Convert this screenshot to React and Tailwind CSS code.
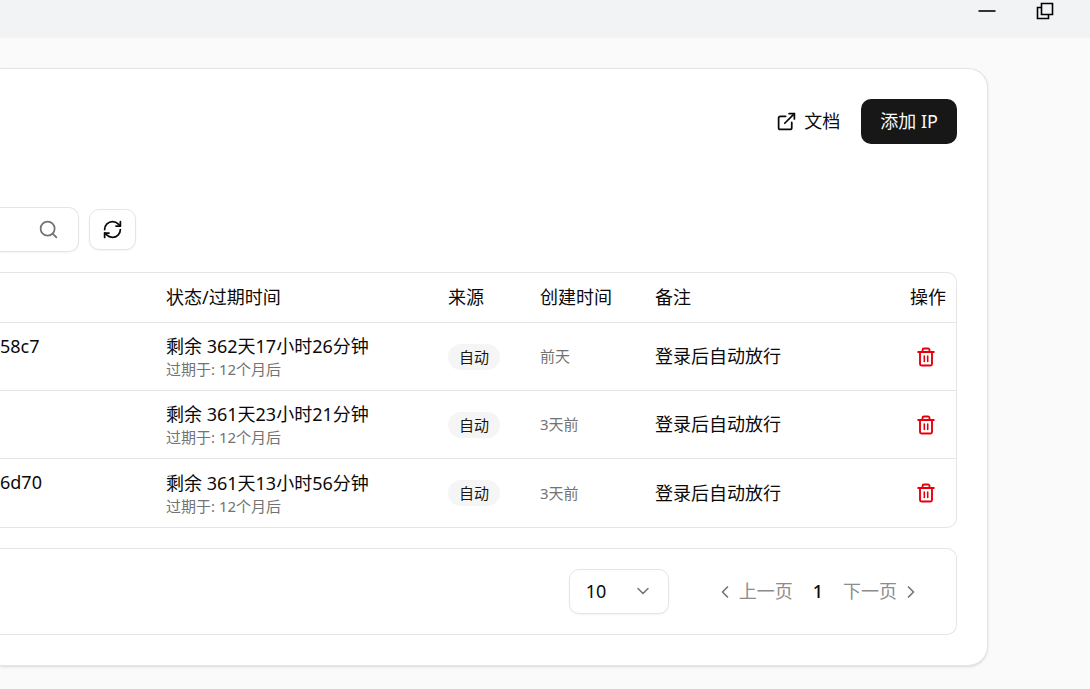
import React, { useState } from 'react';
import { ChevronDown, ChevronLeft, ChevronRight, ExternalLink, RefreshCw, Search } from 'lucide-react';

const rows = [
  { id: 1, ip: '58c7', remaining: '剩余 362天17小时26分钟', expires: '过期于: 12个月后', source: '自动', created: '前天', note: '登录后自动放行' },
  { id: 2, ip: '', remaining: '剩余 361天23小时21分钟', expires: '过期于: 12个月后', source: '自动', created: '3天前', note: '登录后自动放行' },
  { id: 3, ip: '6d70', remaining: '剩余 361天13小时56分钟', expires: '过期于: 12个月后', source: '自动', created: '3天前', note: '登录后自动放行' },
];

const TrashIcon = () => (
  <svg width="18" height="20" viewBox="0 0 18 20" fill="none" stroke="currentColor" strokeWidth="1.9" strokeLinecap="round" strokeLinejoin="round">
    <path d="M1.2 5h15.6" />
    <path d="M5.5 4.500V3a1.500 1.500 0 0 1 1.500-1.500h4A1.500 1.500 0 0 1 12.500 3v1.500" />
    <path d="M3 5v12a1.500 1.500 0 0 0 1.500 1.500h9A1.500 1.500 0 0 0 15 17V5" />
    <path d="M7.300 9v5.500M10.700 9v5.500" strokeWidth="1.600" />
  </svg>
);

const TitleBar = () => (
  <header className="flex h-[38px] items-start justify-end gap-[38px] bg-[#f1f3f5] pr-[35px] text-black">
    <button aria-label="最小化" className="flex h-[22px] w-5 items-center justify-center">
      <svg width="18" height="18" viewBox="0 0 18 18" stroke="#333" strokeWidth="2">
        <path d="M0.5 9h17" />
      </svg>
    </button>
    <button aria-label="还原" className="flex h-[22px] w-5 items-center justify-center">
      <svg width="18" height="18" viewBox="0 0 18 18" fill="none" stroke="currentColor" strokeWidth="1.6">
        <path d="M5.5 1.5h11v11h-11z" />
        <path d="M5.5 5.5h-4v11h11v-4" />
      </svg>
    </button>
  </header>
);

const Pagination = ({ pageSize, onPageSizeChange }) => (
  <div className="mt-5 flex items-center justify-end gap-[46px] rounded-r-[10px] border border-l-0 border-neutral-200 py-5 pr-[35px]">
    <div className="relative">
      <select
        aria-label="每页数量"
        value={pageSize}
        onChange={(e) => onPageSizeChange(e.target.value)}
        className="h-[45px] w-[100px] appearance-none rounded-[10px] border border-neutral-200 bg-white px-4 shadow-xs"
      >
        <option value="10">10</option>
        <option value="20">20</option>
        <option value="50">50</option>
      </select>
      <ChevronDown className="pointer-events-none absolute top-3 right-4 text-neutral-500" size={20} strokeWidth={1.8} />
    </div>
    <nav className="flex items-center gap-5">
      <button disabled className="flex items-center gap-1 text-[#8c8c8c]">
        <ChevronLeft className="text-neutral-500" size={20} />
        上一页
      </button>
      <span className="font-medium">1</span>
      <button disabled className="flex items-center gap-1 text-[#8c8c8c]">
        下一页
        <ChevronRight className="text-neutral-500" size={20} />
      </button>
    </nav>
  </div>
);

const App = () => {
  const [keyword, setKeyword] = useState('');
  const [pageSize, setPageSize] = useState('10');

  return (
    <div className="min-h-screen bg-[#fafafa] font-['Noto_Sans','Noto_Sans_CJK_SC',sans-serif] text-[18px] leading-[25px] text-neutral-950">
      <TitleBar />
      <main className="pt-[30px] pr-[102px] pb-6">
        <section className="rounded-r-[20px] border border-l-0 border-neutral-200 bg-white py-[30px] pr-[30px] shadow-sm">
          <div className="flex items-center justify-end gap-[21px]">
            <a href="#docs" className="flex items-center gap-[7px]">
              <ExternalLink size={21} strokeWidth={2} />
              文档
            </a>
            <button className="h-[45px] rounded-[10px] bg-neutral-900 px-[19px] text-neutral-50">添加 IP</button>
          </div>

          {/* Search */}
          <div className="mt-[63px] flex items-center gap-[10px]">
            <div className="relative">
              <input
                type="text"
                aria-label="搜索"
                value={keyword}
                onChange={(e) => setKeyword(e.target.value)}
                className="h-[45px] w-[79px] rounded-r-[10px] border border-l-0 border-neutral-200 bg-white pr-12 shadow-xs"
              />
              <Search className="pointer-events-none absolute top-3 right-5 text-neutral-500" size={21} strokeWidth={2} />
            </div>
            <button aria-label="刷新" className="flex h-[41px] w-[47px] items-center justify-center rounded-[10px] border border-neutral-200 bg-white shadow-xs">
              <RefreshCw size={21} strokeWidth={2} />
            </button>
          </div>

          <div className="mt-5 overflow-hidden rounded-r-[10px] border border-l-0 border-neutral-200">
            <table className="w-full table-fixed border-separate border-spacing-0 text-left">
              <thead>
                <tr className="*:h-[50px] *:border-b *:border-neutral-200 *:px-[10px] *:font-normal">
                  <th className="w-[156px]"></th>
                  <th className="w-[282px]">状态/过期时间</th>
                  <th className="w-[92px]">来源</th>
                  <th className="w-[115px]">创建时间</th>
                  <th>备注</th>
                  <th className="w-[80px] text-right">操作</th>
                </tr>
              </thead>
              <tbody>
                {rows.map((row) => (
                  <tr key={row.id} className="*:h-[68px] *:border-b *:border-neutral-200 *:py-[11px] *:pr-[10px] last:*:border-b-0">
                    <td className="align-top">{row.ip}</td>
                    <td className="pl-[10px]">
                      <div>{row.remaining}</div>
                      <div className="text-[15px] leading-5 text-neutral-500">{row.expires}</div>
                    </td>
                    <td className="pl-[10px]">
                      <span className="block w-fit rounded-full bg-neutral-100 px-[11px] py-[3px] text-[15px] leading-5 text-neutral-900">
                        {row.source}
                      </span>
                    </td>
                    <td className="pl-[10px] text-[15px] text-neutral-500">{row.created}</td>
                    <td className="pl-[10px]">{row.note}</td>
                    <td>
                      <button aria-label="删除" className="ml-auto flex h-10 w-10 items-center justify-center text-[#e7000b]">
                        <TrashIcon />
                      </button>
                    </td>
                  </tr>
                ))}
              </tbody>
            </table>
          </div>

          <Pagination pageSize={pageSize} onPageSizeChange={setPageSize} />
        </section>
      </main>
    </div>
  );
};

export default App;
